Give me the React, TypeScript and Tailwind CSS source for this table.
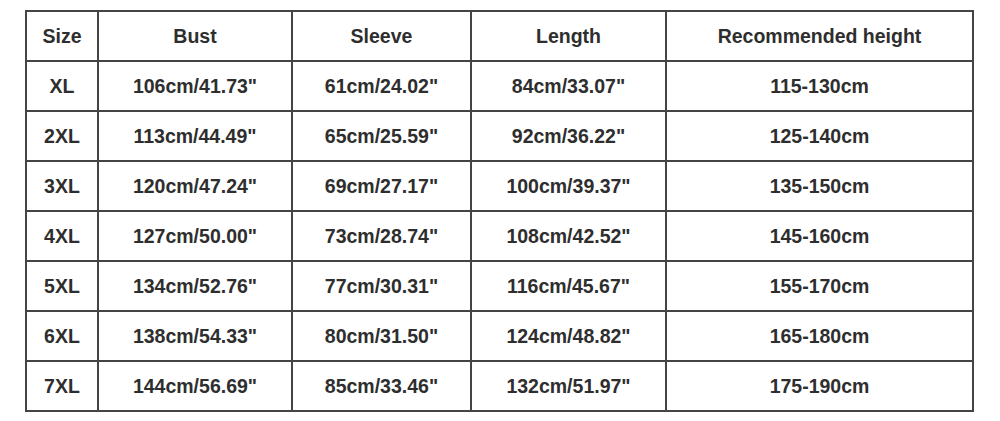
const header = ["Size", "Bust", "Sleeve", "Length", "Recommended height"]

const rows = [
  ["XL", "106cm/41.73\"", "61cm/24.02\"", "84cm/33.07\"", "115-130cm"],
  ["2XL", "113cm/44.49\"", "65cm/25.59\"", "92cm/36.22\"", "125-140cm"],
  ["3XL", "120cm/47.24\"", "69cm/27.17\"", "100cm/39.37\"", "135-150cm"],
  ["4XL", "127cm/50.00\"", "73cm/28.74\"", "108cm/42.52\"", "145-160cm"],
  ["5XL", "134cm/52.76\"", "77cm/30.31\"", "116cm/45.67\"", "155-170cm"],
  ["6XL", "138cm/54.33\"", "80cm/31.50\"", "124cm/48.82\"", "165-180cm"],
  ["7XL", "144cm/56.69\"", "85cm/33.46\"", "132cm/51.97\"", "175-190cm"],
]

export default function App() {
  return (
    <div className="w-[1000px] h-[421px] bg-white pt-[10px] pl-[25px] font-['Liberation_Sans',Arial,sans-serif]">
      <div className="grid w-[949px] grid-cols-[70px_192px_177px_193px_1fr] auto-rows-[48px] gap-[2px] bg-[#444] p-[2px]">
        {[header, ...rows].map((row, r) =>
          row.map((cell, c) => (
            <div
              key={`${r}-${c}`}
              className="flex items-center justify-center bg-white pt-[2px] text-[19.5px] font-bold text-[#2e2e2e]"
            >
              {cell}
            </div>
          ))
        )}
      </div>
    </div>
  )
}
